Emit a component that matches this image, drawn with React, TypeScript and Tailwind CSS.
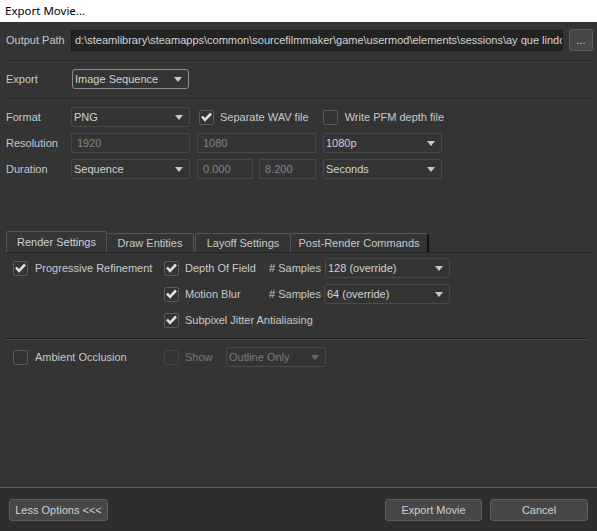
import React from "react";

function Arrow({ dim = false }: { dim?: boolean }) {
  return (
    <svg width="8" height="5" viewBox="0 0 8 5" className="shrink-0">
      <path d="M0 0 H8 L4 5 Z" fill={dim ? "#6a6a6a" : "#c8c8c8"} />
    </svg>
  );
}

function Combo({
  text,
  w,
  focus = false,
  dim = false,
}: {
  text: string;
  w: string;
  focus?: boolean;
  dim?: boolean;
}) {
  return (
    <div
      className={
        "h-[20px] flex items-center justify-between pl-[2px] pr-[6px] rounded-[3px] border " +
        w +
        " " +
        (focus ? "border-[#8c8c8c] rounded-[2px]" : "border-[#4a4a4a]") +
        " " +
        (dim ? "text-[#7a7a7a]" : "text-[#d2d2d2]")
      }
    >
      <span className="leading-none">{text}</span>
      <Arrow dim={dim} />
    </div>
  );
}

function Field({ text, w }: { text: string; w: string }) {
  return (
    <div
      className={
        "h-[20px] flex items-center pl-[5px] border border-[#484848] text-[#858585] " + w
      }
    >
      <span className="leading-none">{text}</span>
    </div>
  );
}

function Check({ checked = false, dim = false }: { checked?: boolean; dim?: boolean }) {
  return (
    <div
      className={
        "w-[15px] h-[15px] rounded-[2px] border flex items-center justify-center shrink-0 " +
        (dim ? "border-[#444444]" : "border-[#5a5a5a]")
      }
    >
      {checked && (
        <svg width="11" height="10" viewBox="0 0 11 10">
          <path d="M1 4.5 L4 7.8 L10 1.5" stroke="#e0e0e0" strokeWidth="2.6" fill="none" />
        </svg>
      )}
    </div>
  );
}

function Sep({ cls = "" }: { cls?: string }) {
  return (
    <div className={"flex flex-col " + cls}>
      <div className="h-px bg-[#232323]" />
      <div className="h-px bg-[#3e3e3e]" />
    </div>
  );
}

function Btn({ text, w }: { text: string; w: string }) {
  return (
    <div
      className={
        "h-[22px] flex items-center justify-center rounded-[3px] border border-[#5e5e5e] bg-[#474747] text-[#cfcfcf] " +
        w
      }
    >
      {text}
    </div>
  );
}

export default function App() {
  return (
    <div className="w-[597px] h-[531px] flex flex-col overflow-hidden font-['Liberation_Sans',Arial,sans-serif] text-[11px]">
      <div className="h-[22px] bg-white flex items-center pl-[5px] text-[11.5px] text-black font-['Noto_Sans',sans-serif]">
        Export Movie...
      </div>
      <div className="flex-1 bg-[#343434] flex flex-col text-[#c6c9cc]">
        {/* Output path */}
        <div className="mt-[7px] flex items-center h-[22px] pl-[6px]">
          <span className="w-[65px]">Output Path</span>
          <div className="w-[492px] h-[21px] bg-[#232323] border border-[#1a1a1a] flex items-center pl-[3px] overflow-hidden whitespace-nowrap text-[#d4d4d4]">
            <span className="overflow-hidden">d:\steamlibrary\steamapps\common\sourcefilmmaker\game\usermod\elements\sessions\ay que lindo r</span>
          </div>
          <div className="ml-[6px] w-[24px] h-[22px] rounded-[3px] border border-[#5e5e5e] bg-[#474747] flex items-center justify-center text-[#cfcfcf]">
            ...
          </div>
        </div>
        <Sep cls="mt-[9px] mx-[5px]" />
        {/* Export */}
        <div className="mt-[7px] flex items-center h-[20px] pl-[6px]">
          <span className="w-[66px]">Export</span>
          <Combo text="Image Sequence" w="w-[117px]" focus />
        </div>
        <Sep cls="mt-[9px] mx-[5px]" />
        {/* Format */}
        <div className="mt-[7px] flex items-center h-[20px] pl-[6px]">
          <span className="w-[65px]">Format</span>
          <Combo text="PNG" w="w-[119px]" />
          <div className="ml-[9px] flex items-center">
            <Check checked />
            <span className="ml-[6px]">Separate WAV file</span>
          </div>
          <div className="ml-[14px] flex items-center">
            <Check />
            <span className="ml-[7px]">Write PFM depth file</span>
          </div>
        </div>
        {/* Resolution */}
        <div className="mt-[6px] flex items-center h-[20px] pl-[6px]">
          <span className="w-[65px]">Resolution</span>
          <Field text="1920" w="w-[119px]" />
          <div className="ml-[7px]">
            <Field text="1080" w="w-[119px]" />
          </div>
          <div className="ml-[7px]">
            <Combo text="1080p" w="w-[119px]" />
          </div>
        </div>
        {/* Duration */}
        <div className="mt-[6px] flex items-center h-[20px] pl-[6px]">
          <span className="w-[65px]">Duration</span>
          <Combo text="Sequence" w="w-[119px]" />
          <div className="ml-[7px]">
            <Field text="0.000" w="w-[56px]" />
          </div>
          <div className="ml-[6px]">
            <Field text="8.200" w="w-[57px]" />
          </div>
          <div className="ml-[7px]">
            <Combo text="Seconds" w="w-[119px]" />
          </div>
        </div>
        {/* Tabs */}
        <div className="mt-[53px] mx-[6px] flex items-end h-[21px] border-b border-[#222222] relative">
          <div className="h-[21px] w-[101px] border border-b-0 border-[#555555] rounded-t-[2px] bg-[#363636] flex items-center justify-center text-[#cfd3d8]">
            Render Settings
          </div>
          <div className="h-[19px] w-[87px] border-t border-r border-[#555555] rounded-t-[2px] flex items-center justify-center">
            Draw Entities
          </div>
          <div className="h-[19px] w-[96px] ml-[1px] border-t border-x border-[#555555] rounded-t-[2px] flex items-center justify-center">
            Layoff Settings
          </div>
          <div className="h-[19px] w-[138px] border-t border-[#555555] border-r-2 border-r-[#111111] rounded-t-[2px] flex items-center justify-center">
            Post-Render Commands
          </div>
        </div>
        {/* Tab content */}
        <div className="flex mt-[5px] pl-[13px]">
          <div className="w-[151px] flex items-center h-[20px]">
            <Check checked />
            <span className="ml-[7px]">Progressive Refinement</span>
          </div>
          <div className="flex flex-col gap-[6px]">
            <div className="flex items-center h-[20px]">
              <Check checked />
              <span className="ml-[6px] w-[84px]">Depth Of Field</span>
              <span className="w-[56px]"># Samples</span>
              <Combo text="128 (override)" w="w-[125px]" />
            </div>
            <div className="flex items-center h-[20px]">
              <Check checked />
              <span className="ml-[6px] w-[84px]">Motion Blur</span>
              <span className="w-[55px]"># Samples</span>
              <Combo text="64 (override)" w="w-[126px]" />
            </div>
            <div className="flex items-center h-[20px]">
              <Check checked />
              <span className="ml-[6px]">Subpixel Jitter Antialiasing</span>
            </div>
          </div>
        </div>
        <div className="mt-[8px] ml-[5px] mr-[9px] flex flex-col">
          <div className="h-px bg-[#1f1f1f]" />
          <div className="h-px bg-[#4a4a4a]" />
        </div>
        <div className="flex items-center mt-[7px] h-[20px] pl-[13px]">
          <div className="w-[151px] flex items-center">
            <Check />
            <span className="ml-[7px]">Ambient Occlusion</span>
          </div>
          <Check dim />
          <span className="ml-[6px] w-[41px] text-[#7a7a7a]">Show</span>
          <Combo text="Outline Only" w="w-[100px]" dim />
        </div>
        <div className="flex-1" />
        <div className="h-px bg-[#5a5a5a]" />
        <div className="h-[43px] bg-[#2e2e2e] flex items-start pt-[11px] pl-[9px] pr-[9px]">
          <Btn text="Less Options <<<" w="w-[99px]" />
          <div className="flex-1" />
          <Btn text="Export Movie" w="w-[97px]" />
          <div className="ml-[8px]">
            <Btn text="Cancel" w="w-[98px]" />
          </div>
        </div>
      </div>
    </div>
  );
}
